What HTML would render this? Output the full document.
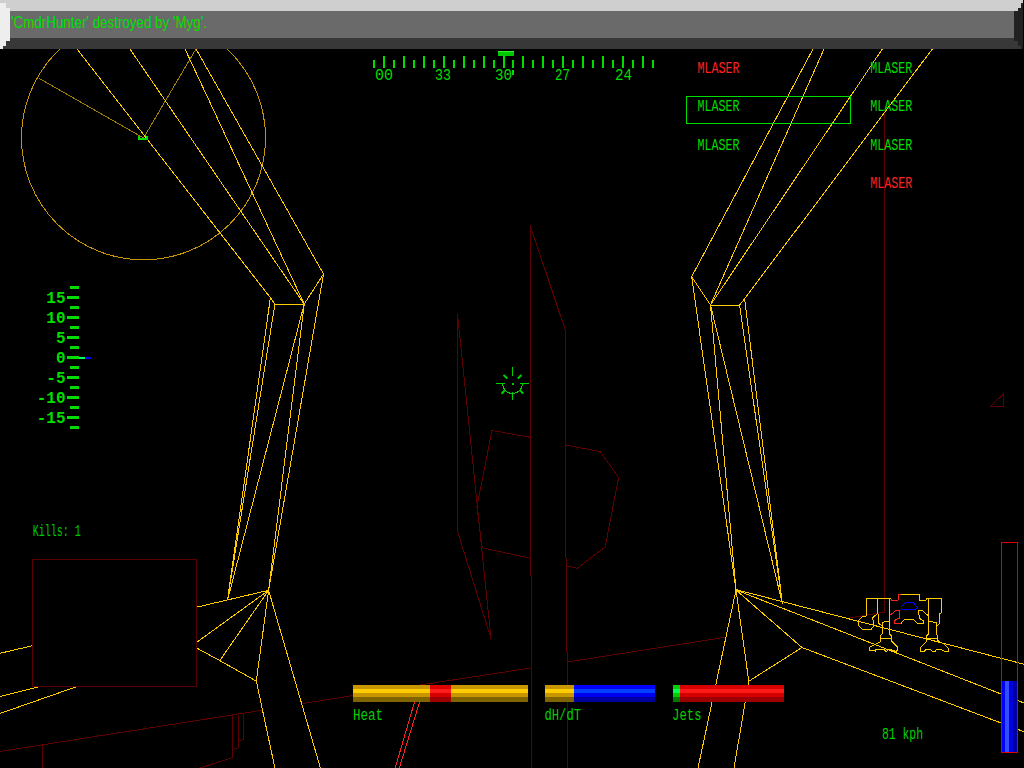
<!DOCTYPE html>
<html><head><meta charset="utf-8">
<style>
html,body{margin:0;padding:0;background:#000;width:1024px;height:768px;overflow:hidden}
svg{display:block;position:absolute;left:0;top:0}
text{font-family:"Liberation Sans",sans-serif;font-size:16px}
.mono{font-family:"Liberation Mono",monospace}
</style></head>
<body>
<svg width="1024" height="768" viewBox="0 0 1024 768">
<rect x="0" y="0" width="1024" height="768" fill="#000"/>

<!-- ground / building (dark red) -->
<g fill="none" stroke="#5c0000" stroke-width="1" shape-rendering="crispEdges">
  <polyline points="0,751.5 262.5,710.2"/>
  <polyline points="301.5,703.7 423.8,684.4 531,668"/>
  <polyline points="567.5,662 725,637.3"/>
  <polyline points="850.3,617.8 884.5,612 884.5,111"/>
  <polyline points="42.5,744 42.5,768"/>
  <polyline points="232.6,715.2 232.6,757.5 200.3,768"/>
  <polyline points="238.6,714.5 238.6,747.9 232.6,749.4"/>
  <polyline points="243.5,713.5 243.5,739.7 238.6,740.5"/>
  <polyline points="990.3,406.5 1003.5,394.1 1003.5,406.5 990.3,406.5"/>
  <!-- left spike -->
  <polyline points="457.5,531.3 457.5,313.9 491,638.5 457.5,531.3"/>
  <!-- hexagon -->
  <polyline points="530.7,558.3 482.2,547.8 476.9,506.7 492,430.4 530.7,437.4"/>
  <polyline points="565.8,445.1 600,451.5 618.6,477.5 605.2,547.1 577.1,568.2 566.5,565.7"/>
  <!-- pillar -->
  <polyline points="531.4,768 530.3,225.6 565.3,330.2 566.3,651.6 567.5,652 567.5,768"/>
</g>

<!-- radar -->
<g fill="none" stroke="#c89600" stroke-width="1" shape-rendering="crispEdges">
  <circle cx="143.5" cy="137.8" r="122"/>
  <polyline points="39,78.3 143.5,138 196,49" stroke="#a08000"/>
</g>

<!-- legs (yellow) -->
<g fill="none" stroke="#ffcc00" stroke-width="1" shape-rendering="crispEdges">
  <!-- left upper -->
  <polyline points="77,49 270.4,297.7 274.9,304.1 304.2,304.1 323.5,274 196,49"/>
  <polyline points="130,49 304.2,304.1 185,49"/>
  <!-- left lower -->
  <polyline points="270.4,297.7 227.5,600.2"/>
  <polyline points="274.9,304.1 227.5,600.2 304.2,304.1 268.6,590.3 323.5,274"/>
  <!-- left foot -->
  <polyline points="268.6,590.3 0,653.3"/>
  <polyline points="268.6,590.3 196.7,642.3"/>
  <polyline points="268.6,590.3 219.8,660.6"/>
  <polyline points="268.6,590.3 256.3,681.1"/>
  <polyline points="268.6,590.3 320.4,768"/>
  <polyline points="0,696.4 196.5,647.9 219.8,660.6 256.3,681.1 274.9,768"/>
  <polyline points="0,713.5 75.4,687.1 196.7,642.3"/>
  <!-- right upper -->
  <polyline points="813,49 691.7,276.7 710.5,305 739.6,305 744.6,298.75 932.3,49"/>
  <polyline points="824,49 710.5,305 882.3,49"/>
  <!-- right lower -->
  <polyline points="691.7,276.7 736,590 710.5,305 782.4,603.7 739.6,305"/>
  <polyline points="744.6,298.75 782.4,603.7"/>
  <!-- right foot -->
  <polyline points="736,589.6 1024,664.2"/>
  <polyline points="736,590 1024,703"/>
  <polyline points="736,590 802,647.5 1024,731.7"/>
  <polyline points="736,590 748.8,681.2 734,768"/>
  <polyline points="748.8,681.2 802,647.5"/>
  <polyline points="736,590 698,768"/>
</g>

<!-- map box -->
<rect x="32.5" y="559.5" width="164" height="127" fill="#000" stroke="#5a0000" stroke-width="1" shape-rendering="crispEdges"/>

<!-- top bar -->
<g shape-rendering="crispEdges">
  <rect x="0" y="0" width="1024" height="49" fill="#6a6a6a"/>
  <rect x="1023" y="0" width="1" height="49" fill="#000"/>
  <polygon points="0,0 1023,0 1023,3 1021,3 1021,8 1018,8 1018,11 0,11" fill="#cfcfcf"/>
  <polygon points="0,3 6,3 6,8 10,8 10,41 6,41 6,46 3,46 3,49 0,49" fill="#eeeeee"/>
  <polygon points="10,38 1014,38 1014,41 1018,41 1018,46 1021,46 1021,49 3,49 3,46 6,46 6,41 10,41" fill="#383838"/>
  <polygon points="1014,11 1018,11 1018,8 1021,8 1021,3 1023,3 1023,49 1021,49 1021,46 1018,46 1018,41 1014,41" fill="#212121"/>
</g>
<text x="11" y="28" fill="#00e000" font-size="15" textLength="196" lengthAdjust="spacingAndGlyphs">'CmdrHunter' destroyed by 'Myg'.</text>


<!-- bright red lines -->
<g fill="none" stroke="#ff2020" stroke-width="1" shape-rendering="crispEdges">
  <line x1="414.5" y1="702" x2="395.2" y2="768"/>
  <line x1="419.6" y1="702" x2="399.3" y2="768"/>
</g>

<!-- compass -->
<g fill="#00dd00" shape-rendering="crispEdges">
  <rect x="373" y="60" width="2" height="8"/>
  <rect x="383" y="56" width="2" height="12"/>
  <rect x="393" y="60" width="2" height="8"/>
  <rect x="403" y="56" width="2" height="12"/>
  <rect x="413" y="60" width="2" height="8"/>
  <rect x="423" y="56" width="2" height="12"/>
  <rect x="433" y="60" width="2" height="8"/>
  <rect x="443" y="56" width="2" height="12"/>
  <rect x="453" y="60" width="2" height="8"/>
  <rect x="463" y="56" width="2" height="12"/>
  <rect x="473" y="60" width="2" height="8"/>
  <rect x="483" y="56" width="2" height="12"/>
  <rect x="493" y="60" width="2" height="8"/>
  <rect x="503" y="56" width="2" height="12"/>
  <rect x="512" y="60" width="2" height="8"/>
  <rect x="522" y="56" width="2" height="12"/>
  <rect x="532" y="60" width="2" height="8"/>
  <rect x="542" y="56" width="2" height="12"/>
  <rect x="552" y="60" width="2" height="8"/>
  <rect x="562" y="56" width="2" height="12"/>
  <rect x="572" y="60" width="2" height="8"/>
  <rect x="582" y="56" width="2" height="12"/>
  <rect x="592" y="60" width="2" height="8"/>
  <rect x="602" y="56" width="2" height="12"/>
  <rect x="612" y="60" width="2" height="8"/>
  <rect x="622" y="56" width="2" height="12"/>
  <rect x="632" y="60" width="2" height="8"/>
  <rect x="642" y="56" width="2" height="12"/>
  <rect x="652" y="60" width="2" height="8"/>
  <rect x="498" y="51" width="16" height="5" fill="#00c800"/>
  <rect x="498" y="51" width="16" height="1" fill="#30f030"/>
  <rect x="512" y="70" width="2" height="5"/>
</g>
<g fill="#00dd00" class="mono">
  <text class="mono" x="375" y="80" textLength="18" lengthAdjust="spacingAndGlyphs">00</text>
  <text class="mono" x="435" y="80" textLength="16" lengthAdjust="spacingAndGlyphs">33</text>
  <text class="mono" x="495" y="80" textLength="17" lengthAdjust="spacingAndGlyphs">30</text>
  <text class="mono" x="555" y="80" textLength="15" lengthAdjust="spacingAndGlyphs">27</text>
  <text class="mono" x="615" y="80" textLength="17" lengthAdjust="spacingAndGlyphs">24</text>
</g>

<!-- weapons -->
<g>
  <text class="mono" x="697.5" y="73" fill="#ff2020" textLength="42" lengthAdjust="spacingAndGlyphs">MLASER</text>
  <text class="mono" x="697.5" y="111" fill="#00dd00" textLength="42" lengthAdjust="spacingAndGlyphs">MLASER</text>
  <text class="mono" x="697.5" y="150" fill="#00dd00" textLength="42" lengthAdjust="spacingAndGlyphs">MLASER</text>
  <text class="mono" x="870.3" y="73" fill="#00dd00" textLength="42" lengthAdjust="spacingAndGlyphs">MLASER</text>
  <text class="mono" x="870.3" y="111" fill="#00dd00" textLength="42" lengthAdjust="spacingAndGlyphs">MLASER</text>
  <text class="mono" x="870.3" y="150" fill="#00dd00" textLength="42" lengthAdjust="spacingAndGlyphs">MLASER</text>
  <text class="mono" x="870.3" y="188" fill="#ff2020" textLength="42" lengthAdjust="spacingAndGlyphs">MLASER</text>
  <rect x="686.5" y="96.5" width="164" height="27" fill="none" stroke="#00dd00" shape-rendering="crispEdges"/>
</g>

<!-- radar marker -->
<g fill="#00e000" shape-rendering="crispEdges">
  <rect x="138" y="138" width="10" height="2"/>
  <rect x="138" y="136" width="2" height="2"/>
  <rect x="146" y="136" width="2" height="2"/>
</g>

<!-- pitch ladder -->
<g fill="#00dd00" shape-rendering="crispEdges">
  <rect x="70" y="286" width="9" height="3"/>
  <rect x="67" y="296" width="12" height="3"/>
  <rect x="70" y="306" width="9" height="3"/>
  <rect x="67" y="316" width="12" height="3"/>
  <rect x="70" y="326" width="9" height="3"/>
  <rect x="67" y="336" width="12" height="3"/>
  <rect x="70" y="346" width="9" height="3"/>
  <rect x="67" y="356" width="12" height="3"/>
  <rect x="70" y="366" width="9" height="3"/>
  <rect x="67" y="376" width="12" height="3"/>
  <rect x="70" y="386" width="9" height="3"/>
  <rect x="67" y="396" width="12" height="3"/>
  <rect x="70" y="406" width="9" height="3"/>
  <rect x="67" y="416" width="12" height="3"/>
  <rect x="70" y="426" width="9" height="3"/>
  <rect x="79" y="357" width="6" height="2" fill="#00ff60"/>
  <rect x="85" y="357" width="6" height="2" fill="#0000ff"/>
</g>
<g fill="#00dd00" font-weight="bold" text-anchor="end">
  <text class="mono" x="65.5" y="303">15</text>
  <text class="mono" x="65.5" y="323">10</text>
  <text class="mono" x="65.5" y="343">5</text>
  <text class="mono" x="65.5" y="363">0</text>
  <text class="mono" x="65.5" y="383">-5</text>
  <text class="mono" x="65.5" y="403">-10</text>
  <text class="mono" x="65.5" y="423">-15</text>
</g>

<!-- crosshair -->
<g fill="none" stroke="#00d000" stroke-width="1" shape-rendering="crispEdges">
  <line x1="512.5" y1="367" x2="512.5" y2="376"/>
  <line x1="512.5" y1="392" x2="512.5" y2="400"/>
  <line x1="496" y1="383.5" x2="505" y2="383.5"/>
  <line x1="520" y1="383.5" x2="529" y2="383.5"/>
  <path d="M502.5,383.5 A10,10 0 0 0 522.5,383.5"/>
</g>
<g fill="none" stroke="#00d000" stroke-width="2">
  <line x1="503.5" y1="375" x2="507.4" y2="378.4"/>
  <line x1="521.4" y1="375" x2="517.8" y2="378.4"/>
  <line x1="501.6" y1="393.7" x2="504.8" y2="390.3"/>
  <line x1="523.2" y1="393.7" x2="520.1" y2="390.3"/>
</g>
<rect x="511.5" y="382.5" width="2" height="2" fill="#00d000" shape-rendering="crispEdges"/>

<!-- kills -->
<text class="mono" x="32.8" y="536" fill="#00c800" textLength="48" lengthAdjust="spacingAndGlyphs">Kills: 1</text>

<!-- bars -->
<g shape-rendering="crispEdges">
  <rect x="353" y="685" width="175" height="4" fill="#c89600"/>
  <rect x="353" y="689" width="175" height="4" fill="#ffcc00"/>
  <rect x="353" y="693" width="175" height="4" fill="#c89600"/>
  <rect x="353" y="697" width="175" height="5" fill="#7f6400"/>
  <rect x="430" y="685" width="21" height="4" fill="#dc0000"/>
  <rect x="430" y="689" width="21" height="4" fill="#ff1c1c"/>
  <rect x="430" y="693" width="21" height="4" fill="#d40000"/>
  <rect x="430" y="697" width="21" height="5" fill="#9c0000"/>

  <rect x="545" y="685" width="29" height="4" fill="#c89600"/>
  <rect x="545" y="689" width="29" height="4" fill="#ffcc00"/>
  <rect x="545" y="693" width="29" height="4" fill="#c89600"/>
  <rect x="545" y="697" width="29" height="5" fill="#7f6400"/>
  <rect x="574" y="685" width="81" height="4" fill="#0000ff"/>
  <rect x="574" y="689" width="81" height="4" fill="#0040ff"/>
  <rect x="574" y="693" width="81" height="4" fill="#0000f0"/>
  <rect x="574" y="697" width="81" height="5" fill="#0000a0"/>

  <rect x="673" y="685" width="7" height="4" fill="#00d000"/>
  <rect x="673" y="689" width="7" height="4" fill="#00ff50"/>
  <rect x="673" y="693" width="7" height="4" fill="#00d000"/>
  <rect x="673" y="697" width="7" height="5" fill="#007a00"/>
  <rect x="680" y="685" width="104" height="4" fill="#d80000"/>
  <rect x="680" y="689" width="104" height="4" fill="#ff1a1a"/>
  <rect x="680" y="693" width="104" height="4" fill="#d40000"/>
  <rect x="680" y="697" width="104" height="5" fill="#9c0000"/>
</g>
<g fill="#00d000">
  <text class="mono" x="352.9" y="720" textLength="30" lengthAdjust="spacingAndGlyphs">Heat</text>
  <text class="mono" x="544.5" y="720" textLength="36.5" lengthAdjust="spacingAndGlyphs">dH/dT</text>
  <text class="mono" x="672" y="720" textLength="29.5" lengthAdjust="spacingAndGlyphs">Jets</text>
  <text class="mono" x="882" y="739" textLength="41" lengthAdjust="spacingAndGlyphs">81 kph</text>
</g>

<!-- right vertical gauge -->
<g shape-rendering="crispEdges">
  <rect x="1002" y="681" width="3" height="71" fill="#0000ff"/>
  <rect x="1005" y="681" width="4" height="71" fill="#3050ff"/>
  <rect x="1009" y="681" width="4" height="71" fill="#0000e0"/>
  <rect x="1013" y="681" width="4" height="71" fill="#0000a0"/>
  <rect x="1001.5" y="542.5" width="16" height="210" fill="none" stroke="#e00000"/>
</g>

<!-- mech -->
<g fill="none" stroke-width="1" shape-rendering="crispEdges">
  <g stroke="#ffcc00">
    <polyline points="866.6,615.8 866.6,598.3 890.6,598.3"/>
    <polyline points="900.8,594.3 919.9,594.3 919.9,600.2 925.7,600.5 927.2,598.3 941.4,598.3 941.4,613.4"/>
    <polyline points="877.4,598.3 877.4,613.9 873.0,617.3 872.5,619.2 873.5,620.7 873.5,626.1 871.0,629.5 862.3,629.5 858.3,625.6 858.3,620.7 862.3,616.8 866.6,615.8"/>
    <polyline points="877.9,613.4 878.9,615.8 878.9,623.6 881.8,625.6"/>
    <polyline points="889.6,598.3 889.6,633.9 891.6,635.9 891.6,641.2 897.4,647.1 897.4,650.5 895.9,651.5 893.0,650.5"/>
    <polyline points="889.1,621.2 882.8,622.2 882.8,633.4 880.3,635.9 880.3,641.7 876.9,643.7 869.6,647.1 869.6,650.5 875.4,651.0 875.9,649.0 884.2,649.0 885.2,651.0 887.2,651.0 888.1,649.3 892.0,650.0 893.0,651.5 896.9,651.5 897.4,647.6"/>
    <polyline points="880.3,638.3 891.6,638.3"/>
    <polyline points="941.4,613.4 939.9,613.4 939.9,623.6 937.0,625.6 935.5,622.2 928.7,621.7"/>
    <polyline points="928.7,598.3 928.7,633.9 926.7,635.9 926.7,641.2 920.4,647.6 920.4,651.0 924.8,651.0 925.7,649.0 930.1,649.0 932.1,651.0 935.5,651.0 936.5,649.0 940.4,649.0 943.8,651.0 948.7,651.0 948.7,648.5 944.8,644.6 937.9,640.7 937.9,635.9 936.0,633.4 936.0,622.2"/>
    <polyline points="926.7,638.8 937.9,638.8"/>
    <polyline points="900.8,623.6 904.7,619.2 913.5,619.2 917.4,623.6 923.3,623.6 923.8,621.2 919.4,618.3 918.4,610.5 922.3,610.5 927.7,615.3"/>
  </g>
  <g stroke="#ff2020">
    <polyline points="891.1,598.7 891.6,600.2 897.9,600.2 898.9,594.8 900.8,594.3"/>
    <polyline points="890.6,614.9 895.5,610.5 899.9,610.5 899.9,618.3 895.9,619.2 894.0,621.7 895.0,623.6 900.8,623.6"/>
  </g>
  <g stroke="#0000ff">
    <polyline points="900.8,607.5 905.2,602.5 913.0,602.5 917.4,607.5 916.0,609.3 902.3,609.3 900.8,607.5"/>
  </g>
</g>

</svg>
</body></html>
